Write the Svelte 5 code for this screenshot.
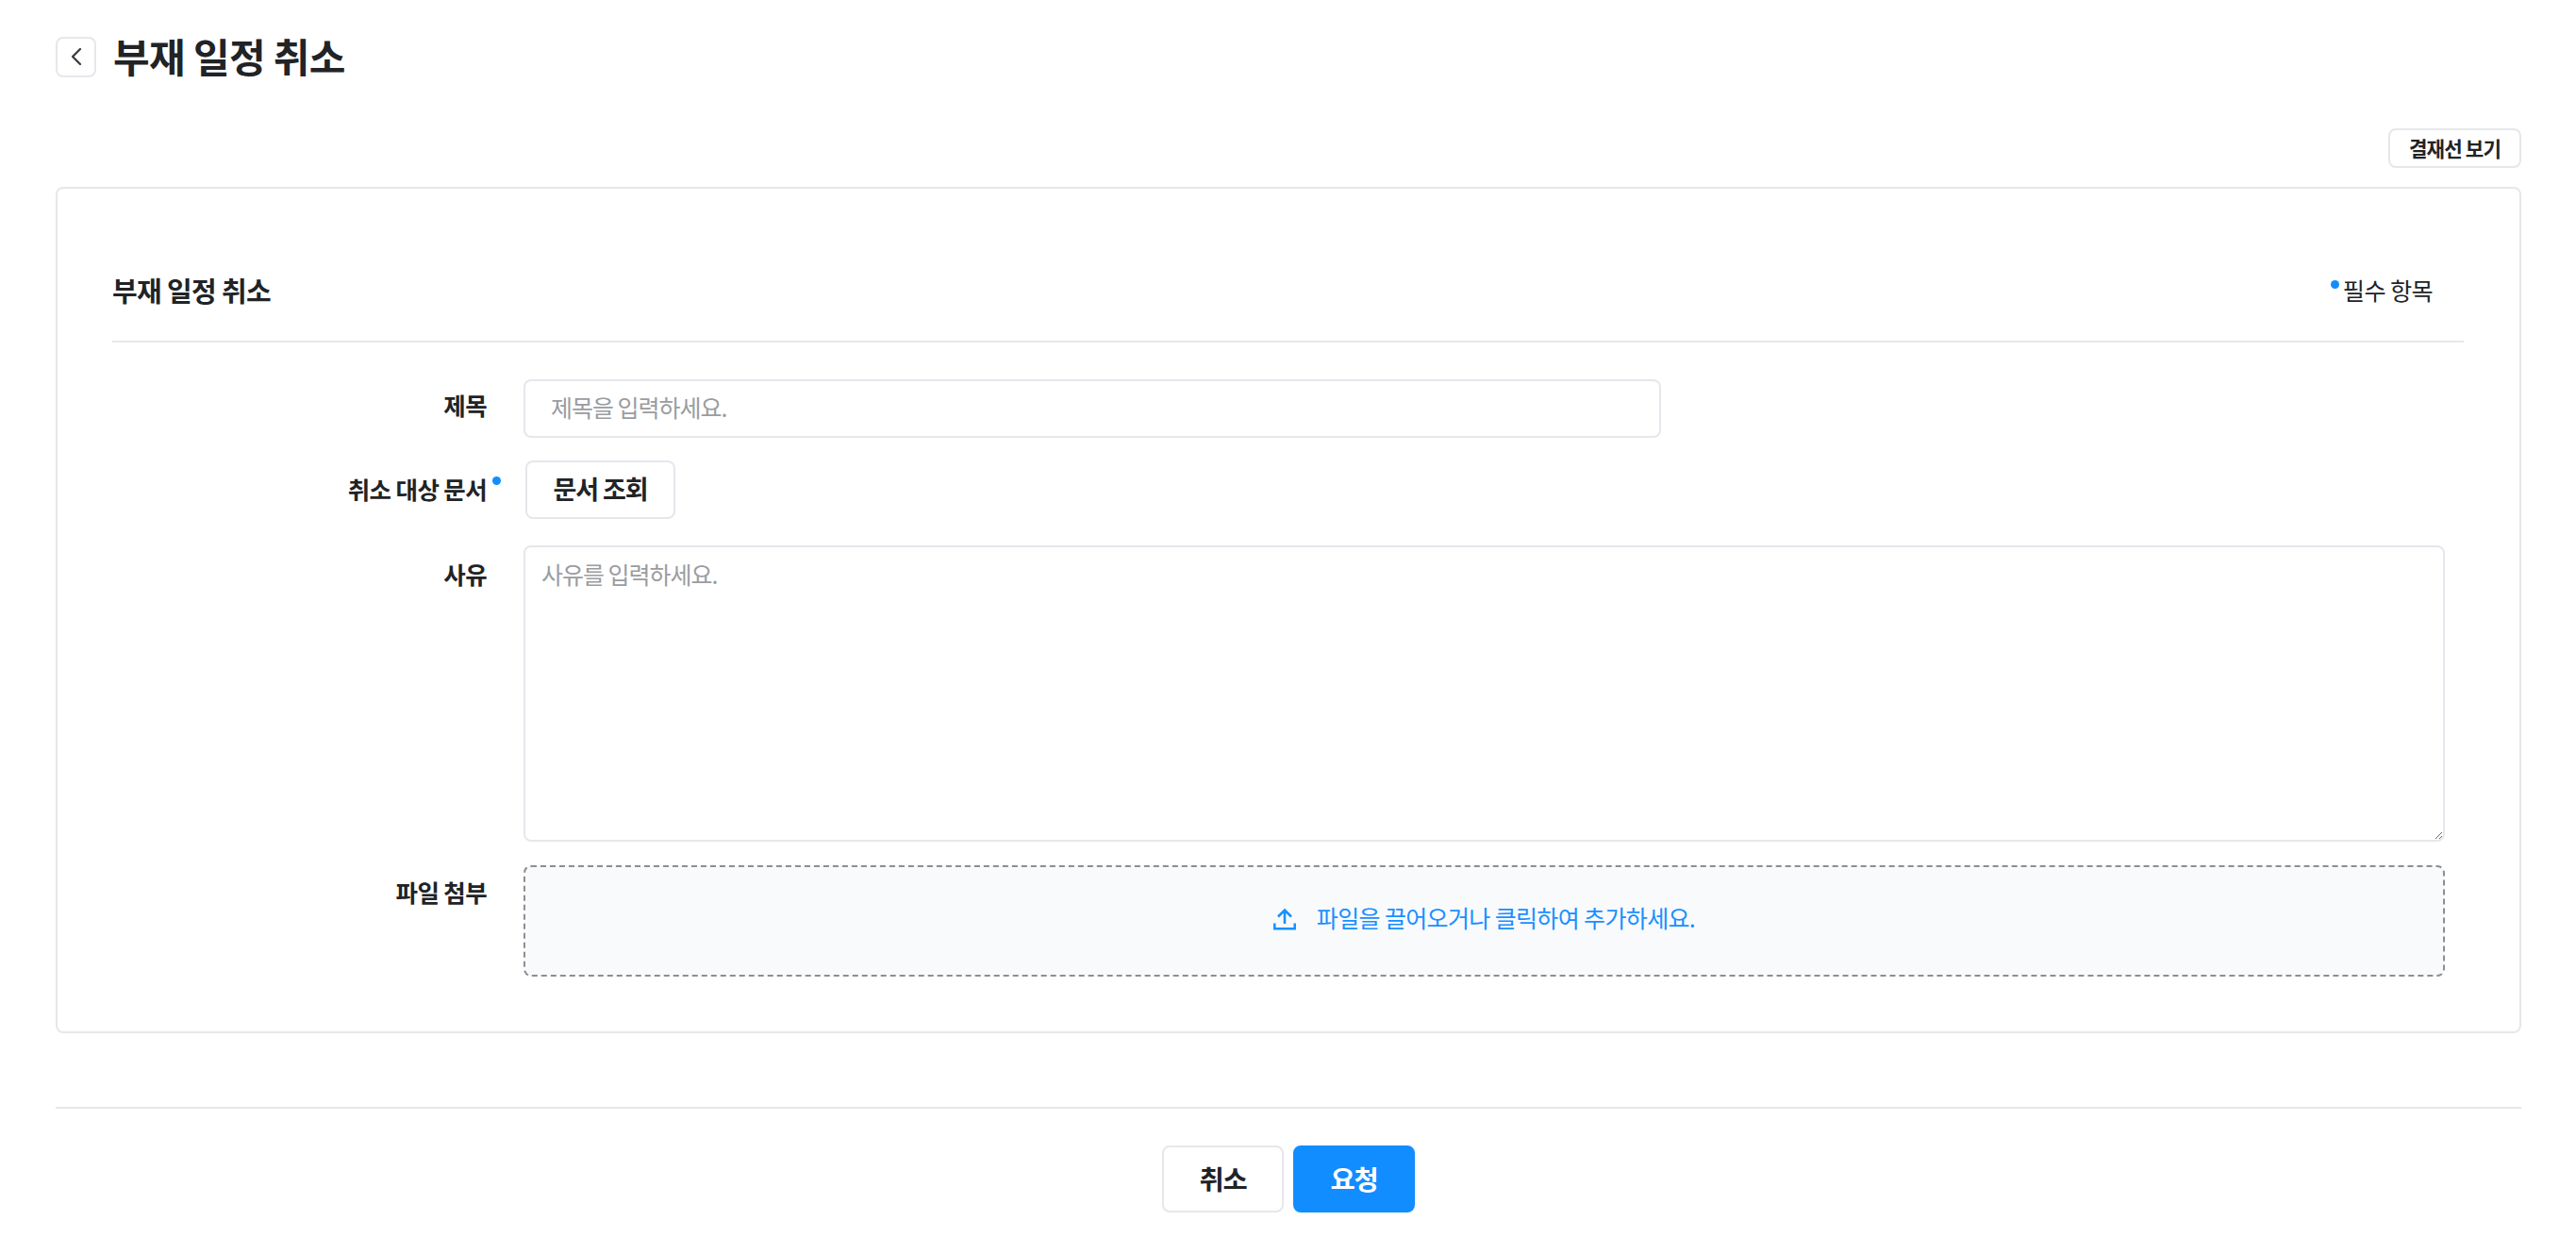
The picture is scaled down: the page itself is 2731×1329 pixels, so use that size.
<script>
  let title = $state('');
  let reason = $state('');
</script>

<div class="page">
  <header class="head">
    <button class="back" aria-label="뒤로">
      <svg width="20" height="20" viewBox="0 0 20 20" fill="none"><path d="M14 2 6 10l8 8" stroke="#3a3d42" stroke-width="2.300" stroke-linecap="round" stroke-linejoin="round"/></svg>
    </button>
    <h1>부재 일정 취소</h1>
  </header>

  <div class="tools"><button class="line">결재선 보기</button></div>

  <section class="card">
    <div class="card-head">
      <h2>부재 일정 취소</h2>
      <span class="req"><i class="dot"></i>필수 항목</span>
    </div>
    <div class="form">
      <div class="lab l1">제목</div>
      <input class="inp" placeholder="제목을 입력하세요." bind:value={title} />

      <div class="lab l2">취소 대상 문서<i class="dot d2"></i></div>
      <button class="lookup">문서 조회</button>

      <div class="lab l3">사유</div>
      <textarea class="area" placeholder="사유를 입력하세요." bind:value={reason}></textarea>

      <div class="lab l4">파일 첨부</div>
      <div class="drop">
        <svg class="up" width="24" height="24" viewBox="0 0 24 24" fill="none"><path d="M12 17V3M5 9.500 12 2.500 19 9.500" stroke="#1890ff" stroke-width="2.600"/><path d="M1.300 16.500v5.800h21.400v-5.800" stroke="#1890ff" stroke-width="2.500"/></svg>
        <span class="drop-text">파일을 끌어오거나 클릭하여 추가하세요.</span>
      </div>
    </div>
  </section>

  <footer class="foot">
    <button class="act">취소</button>
    <button class="act pri">요청</button>
  </footer>
</div>

<style>
  :global(body) { margin: 0; background: #fff; }
  .page { font-family: "Noto Sans CJK KR", "Noto Sans", sans-serif; color: #212326; padding: 0 58px 44px 59px; box-sizing: border-box; letter-spacing: -0.04em; }
  button, input, textarea { font-family: inherit; box-sizing: border-box; letter-spacing: -0.04em; }
  .head { display: flex; align-items: center; gap: 18px; height: 120px; }
  .back { width: 43px; height: 43px; padding: 0; background: #fff; border: 2px solid #e6e7ec; border-radius: 8px; display: flex; align-items: center; justify-content: center; }
  h1 { margin: 0 0 3px; font-size: 42px; font-weight: 700; line-height: 1; }
  .tools { display: flex; justify-content: flex-end; padding-top: 16px; height: 62px; box-sizing: content-box; }
  .line { height: 42px; width: 141px; padding: 0 0 2px; background: #fff; border: 2px solid #e6e7ec; border-radius: 8px; font-size: 21.200px; font-weight: 700; color: #212326; }
  .card { border: 2px solid #e6e7ec; border-radius: 8px; padding: 58px 59px 58px 58px; height: 897px; box-sizing: border-box; }
  .card-head { display: flex; align-items: center; justify-content: space-between; height: 105px; border-bottom: 2px solid #e6e7ec; padding: 0 33px 5px 0; box-sizing: border-box; }
  h2 { margin: 0; font-size: 29px; font-weight: 700; line-height: 1; }
  .req { font-size: 25.200px; line-height: 36px; display: inline-flex; align-items: center; position: relative; }
  .dot { display: block; width: 9px; height: 9px; border-radius: 50%; background: #128dff; }
  .req .dot { position: absolute; left: -13px; top: 8px; }
  .form { display: grid; grid-template-columns: 397px 1fr; padding-top: 39px; }
  .lab { text-align: right; font-size: 25.500px; font-weight: 700; line-height: 38px; position: relative; }
  .l1 { padding-top: 8px; }
  .l2 { padding-top: 35px; }
  .l3 { padding-top: 39px; }
  .l4 { padding-top: 34px; }
  .d2 { position: absolute; right: -15px; top: 41px; }
  .inp { margin-left: 39px; width: 1206px; height: 62px; border: 2px solid #e6e7ec; border-radius: 8px; padding: 0 27px 5px; font-size: 25px; outline: none; }
  .inp::placeholder, .area::placeholder { color: #9a9ca1; opacity: 1; }
  .lookup { margin: 24px 0 0 41px; width: 159px; height: 62px; padding: 0 0 3px; background: #fff; border: 2px solid #e6e7ec; border-radius: 8px; font-size: 27px; font-weight: 700; color: #212326; }
  .area { display: block; margin: 28px 0 0 39px; width: 2037px; height: 314px; border: 2px solid #e6e7ec; border-radius: 8px; padding: 11px 17px; font-size: 25px; outline: none; resize: vertical; line-height: 1.4; }
  .drop { margin: 25px 0 0 39px; width: 2037px; height: 118px; box-sizing: border-box; padding-bottom: 5px; border: 2px dashed #8c8e93; border-radius: 8px; background: #f9fafc; color: #1890ff; font-size: 25px; display: flex; align-items: center; justify-content: center; gap: 22px; }
  .drop-text { margin-bottom: 3px; }
  .up { overflow: visible; }
  .foot { margin-top: 78px; border-top: 2px solid #e6e7ec; padding-top: 39px; display: flex; justify-content: center; gap: 10px; }
  .act { width: 129px; height: 71px; padding: 0 0 2px; background: #fff; border: 2px solid #e6e7ec; border-radius: 8px; font-size: 28.500px; font-weight: 700; color: #212326; }
  .pri { background: #128dff; border-color: #128dff; color: #fff; }
</style>
